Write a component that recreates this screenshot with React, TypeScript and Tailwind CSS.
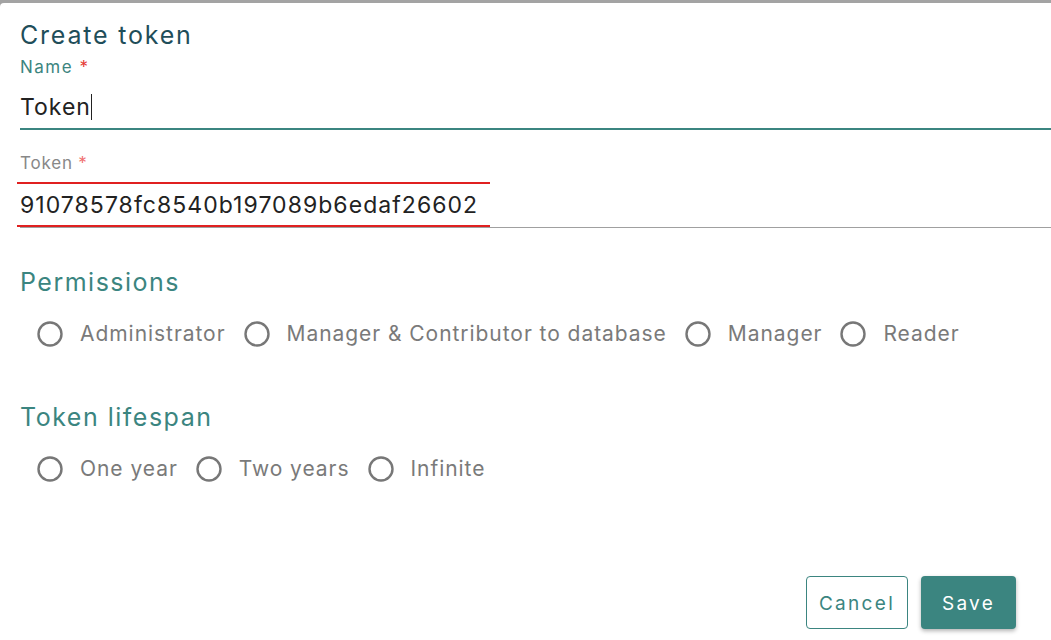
import { useState } from "react";

const permissions = ["Administrator", "Manager & Contributor to database", "Manager", "Reader"];
const lifespans = ["One year", "Two years", "Infinite"];

function Radio({ label, checked, onClick }: { label: string; checked: boolean; onClick: () => void }) {
  return (
    <button onClick={onClick} className="flex items-center gap-[17px] pl-[17px] text-[21px] leading-[30px] tracking-[0.95px] text-[#7a7a7a]">
      <svg width="26" height="26" viewBox="0 0 26 26">
        <circle cx="13" cy="13" r="11.5" fill="none" stroke="#777" strokeWidth="2.4" />
        {checked && <circle cx="13" cy="13" r="6" fill="#3b8580" />}
      </svg>
      <span>{label}</span>
    </button>
  );
}

export default function App() {
  const [perm, setPerm] = useState<string | null>(null)
  const [life, setLife] = useState<string | null>(null)

  return (
    <div className="h-[640px] w-[1051px] overflow-hidden bg-[#a3a3a3] pt-[3px] font-['Inter',sans-serif]">
      <div className="flex h-full flex-col rounded-tl-[4px] bg-white pl-5 pt-4">
        <h2 className="text-[25px] leading-[32px] tracking-[1.8px] text-[#1f4e5a]">Create token</h2>

        <label className="mt-[6px] text-[17px] leading-[20px] tracking-[1.5px] text-[#3b8580]">
          Name <span className="text-[#e53935]">*</span>
        </label>
        <div className="mt-[15px] flex items-center border-b-2 border-[#3b8580] pb-[6px]">
          <span className="text-[23px] leading-[30px] tracking-[1px] text-[#222]">Token</span>
          <span className="h-[26px] w-px bg-[#222]"></span>
        </div>

        <label className="mt-[23px] text-[17px] leading-[20px] tracking-[0.8px] text-[#888]">
          Token <span className="text-[#f07070]">*</span>
        </label>
        <div className="border-b border-[#a0a0a0]">
          <div className="-ml-[3px] mt-[9px] w-[473px] border-y-2 border-[#e02020] pl-[3px] pt-[6px] pb-[5px]">
            <span className="text-[23px] leading-[30px] tracking-[1.05px] text-[#222]">91078578fc8540b197089b6edaf26602</span>
          </div>
        </div>

        <h3 className="mt-[38px] text-[25px] leading-[32px] tracking-[1.5px] text-[#3b8580]">Permissions</h3>
        <div className="mt-[21px] flex gap-[1px]">
          {permissions.map(p => (
            <Radio key={p} label={p} checked={perm === p} onClick={() => setPerm(p)} />
          ))}
        </div>

        <h3 className="mt-[52px] text-[25px] leading-[32px] tracking-[1.5px] text-[#3b8580]">Token lifespan</h3>
        <div className="mt-[21px] flex gap-[1px]">
          {lifespans.map(l => (
            <Radio key={l} label={l} checked={life === l} onClick={() => setLife(l)} />
          ))}
        </div>

        <div className="mt-auto mb-[11px] flex justify-end gap-[13px] pr-[35px]">
          <button className="h-[53px] w-[102px] rounded-[4px] border border-[#3b8580] pt-[3px] text-[19px] tracking-[2.3px] text-[#3b8580]">
            Cancel
          </button>
          <button className="h-[53px] w-[95px] rounded-[4px] bg-[#3b8580] pt-[3px] text-[19px] tracking-[2.3px] text-white shadow-[0_2px_4px_rgba(0,0,0,0.3)]">
            Save
          </button>
        </div>
      </div>
    </div>
  )
}
